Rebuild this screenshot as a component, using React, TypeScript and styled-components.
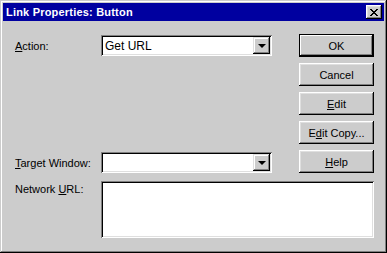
import React from "react";
import styled, { createGlobalStyle } from "styled-components";

const GlobalStyle = createGlobalStyle`
  html, body {
    margin: 0;
    padding: 0;
    background: #cccccc;
  }
  body {
    font-family: "Liberation Sans", Arial, sans-serif;
    font-size: 11px;
    color: #000;
  }
`;

export default function App() {
  return (
    <>
      <GlobalStyle />
      <Window>
        <TitleBar>
          <Title>Link Properties: Button</Title>
          <CloseButton>
            <svg width="8" height="7" viewBox="0 0 8 7">
              <path d="M0 0h2v1h1v1h2v-1h1v-1h2v1h-1v1h-1v1h-1v1h1v1h1v1h1v1h-2v-1h-1v-1h-2v1h-1v1h-2v-1h1v-1h1v-1h1v-1h-1v-1h-1v-1h-1z" fill="#000" />
            </svg>
          </CloseButton>
        </TitleBar>
        <Body>
          <TopSection>
            <FormColumn>
              <FieldRow>
                <Label>
                  <u>A</u>ction:
                </Label>
                <Select>
                  <SelectValue>Get URL</SelectValue>
                  <ArrowButton>
                    <Arrow />
                  </ArrowButton>
                </Select>
              </FieldRow>
              <FieldRow>
                <Label>
                  <u>T</u>arget Window:
                </Label>
                <Select>
                  <SelectValue />
                  <ArrowButton>
                    <Arrow />
                  </ArrowButton>
                </Select>
              </FieldRow>
            </FormColumn>
            <ButtonColumn>
              <Button $default>OK</Button>
              <Button>Cancel</Button>
              <Button>
                <u>E</u>dit
              </Button>
              <Button>
                E<u>d</u>it Copy...
              </Button>
              <Button>
                <u>H</u>elp
              </Button>
            </ButtonColumn>
          </TopSection>
          <NetworkRow>
            <TopLabel>
              Network <u>U</u>RL:
            </TopLabel>
            <TextArea />
          </NetworkRow>
        </Body>
      </Window>
    </>
  );
}

const Window = styled.div`
  width: 387px;
  height: 253px;
  box-sizing: border-box;
  padding: 3px;
  background: #cccccc;
  display: flex;
  flex-direction: column;
  box-shadow: inset -1px -1px #000, inset 1px 1px #cccccc, inset -2px -2px #808080,
    inset 2px 2px #fff;
`;

const TitleBar = styled.div`
  height: 18px;
  background: #0000a0;
  display: flex;
  align-items: center;
  justify-content: space-between;
  padding: 0 2px 0 3px;
`;

const Title = styled.div`
  color: #fff;
  font-weight: bold;
  font-size: 11px;
  letter-spacing: 0.2px;
`;

const CloseButton = styled.div`
  width: 16px;
  height: 14px;
  box-sizing: border-box;
  background: #cccccc;
  display: flex;
  align-items: center;
  justify-content: center;
  box-shadow: inset -1px -1px #000, inset 1px 1px #fff, inset -2px -2px #808080,
    inset 2px 2px #dfdfdf;
  svg {
    display: block;
  }
`;

const Body = styled.div`
  flex: 1;
  display: flex;
  flex-direction: column;
  padding: 13px 10px 0 12px;
`;

const TopSection = styled.div`
  display: flex;
  gap: 27px;
`;

const FormColumn = styled.div`
  width: 257px;
  display: flex;
  flex-direction: column;
  justify-content: space-between;
  padding-top: 1px;
`;

const FieldRow = styled.div`
  display: grid;
  grid-template-columns: 86px 171px;
  align-items: center;
`;

const Label = styled.div`
  white-space: nowrap;
`;

const TopLabel = styled(Label)`
  padding-top: 2px;
`;

const Sunken = styled.div`
  box-sizing: border-box;
  background: #fff;
  box-shadow: inset 1px 1px #808080, inset -1px -1px #fff, inset 2px 2px #000,
    inset -2px -2px #dfdfdf;
`;

const Select = styled(Sunken)`
  height: 21px;
  display: flex;
  align-items: center;
  padding: 2px;
`;

const SelectValue = styled.div`
  flex: 1;
  padding-left: 2px;
  font-size: 12px;
`;

const ArrowButton = styled.div`
  width: 17px;
  height: 17px;
  box-sizing: border-box;
  background: #cccccc;
  display: flex;
  align-items: center;
  justify-content: center;
  box-shadow: inset -1px -1px #000, inset 1px 1px #dfdfdf, inset -2px -2px #808080,
    inset 2px 2px #fff;
`;

const Arrow = styled.div`
  width: 0;
  height: 0;
  border-left: 4px solid transparent;
  border-right: 4px solid transparent;
  border-top: 4px solid #000;
  margin-top: 1px;
`;

const ButtonColumn = styled.div`
  width: 75px;
  display: flex;
  flex-direction: column;
  gap: 6px;
`;

const Button = styled.div<{ $default?: boolean }>`
  height: 23px;
  box-sizing: border-box;
  background: #cccccc;
  display: flex;
  align-items: center;
  justify-content: center;
  font-size: 11px;
  box-shadow: ${(p) =>
    p.$default
      ? "inset 0 0 0 1px #000, inset -2px -2px #000, inset 2px 2px #fff, inset -3px -3px #808080"
      : "inset -1px -1px #000, inset 1px 1px #fff, inset -2px -2px #808080, inset 2px 2px #dfdfdf"};
`;

const NetworkRow = styled.div`
  margin-top: 8px;
  display: grid;
  grid-template-columns: 86px 273px;
  align-items: start;
`;

const TextArea = styled(Sunken)`
  height: 57px;
`;
